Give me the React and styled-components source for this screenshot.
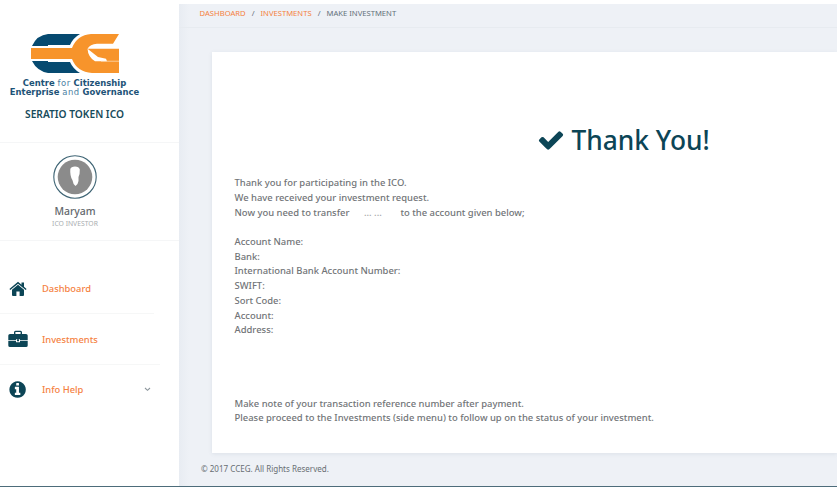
import React from 'react';
import styled, { createGlobalStyle } from 'styled-components';

const Global = createGlobalStyle`
  * { box-sizing: border-box; }
  body { margin: 0; background: #fff; overflow: hidden; font-family: "Noto Sans", "Open Sans", sans-serif; }
`;

const Page = styled.div`
  height: 487px;
  margin-bottom: 9px;
  padding-top: 4px;
  display: flex;
  border-bottom: 1px solid #4d6c7a;
`;

const Sidebar = styled.aside`
  width: 179px;
  flex: none;
  display: flex;
  flex-direction: column;
`;

const Brand = styled.div`
  height: 139px;
  padding: 30px 30px 0 0;
  display: flex;
  flex-direction: column;
  align-items: center;
  border-bottom: 1px solid #f5f6f7;
`;

const LogoText = styled.div`
  margin-top: 5px;
  text-align: center;
  white-space: nowrap;
  font: 700 8.45px/9px "DejaVu Sans", sans-serif;
  color: #1d5377;
  span { font-weight: 400; color: #4b82a3; letter-spacing: 0.5px; }
`;

const BrandTitle = styled.div`
  margin-top: 9px;
  font-size: 10.2px;
  font-weight: 600;
  line-height: 16px;
  white-space: nowrap;
  color: #174b5b;
`;

const Profile = styled.div`
  height: 98px;
  padding: 12px 29px 0 0;
  display: flex;
  flex-direction: column;
  align-items: center;
  border-bottom: 1px solid #f5f6f7;
`;

const UserName = styled.div`
  margin-top: 5px;
  font-size: 10.4px;
  font-weight: 500;
  line-height: 15px;
  color: #62686c;
`;

const Role = styled.div`
  font-size: 6.8px;
  line-height: 9px;
  color: #a9adb0;
`;

const Nav = styled.nav`
  padding-top: 23px;
  display: flex;
  flex-direction: column;
`;

const NavItem = styled.a`
  width: ${(p) => p.$width}px;
  height: ${(p) => p.$height}px;
  display: flex;
  align-items: center;
  font-size: 9.35px;
  font-weight: 500;
  color: #f5813f;
  border-bottom: 1px solid ${(p) => (p.$last ? 'transparent' : '#f6f7f7')};
`;

const NavIcon = styled.span`
  width: 36px;
  margin-right: 6px;
  display: flex;
  justify-content: center;
  color: #0c4556;
`;

const Caret = styled.svg`
  margin-left: auto;
`;

const Main = styled.main`
  flex: 1;
  min-width: 0;
  display: flex;
  flex-direction: column;
  background: linear-gradient(90deg, #e8ecf2, #eef1f6 10px);
`;

const Breadcrumbs = styled.div`
  height: 24px;
  padding: 0 0 5px 20.5px;
  display: flex;
  align-items: center;
  gap: 6px;
  font-size: 7.65px;
  white-space: nowrap;
  color: #63707a;
  border-bottom: 1px solid #e7ebf0;
`;

const Crumb = styled.a`
  color: #f5813f;
`;

const Card = styled.section`
  height: 401px;
  margin: 24px 0 0 33px;
  padding: 68px 0 0 22.5px;
  background: #fff;
  box-shadow: 0 1px 4px rgba(100, 115, 140, 0.12);
`;

const Heading = styled.h1`
  margin: 0;
  padding-left: 302px;
  height: 40px;
  display: flex;
  align-items: center;
  gap: 7px;
  font-size: 26.3px;
  font-weight: 500;
  white-space: nowrap;
  color: #0c4556;
`;

const Copy = styled.div`
  margin-top: ${(p) => p.$top}px;
  font-size: 9.44px;
  font-weight: 500;
  line-height: 14.7px;
  white-space: nowrap;
  color: #717477;
`;

const Blank = styled.span`
  display: inline-block;
  width: 51px;
  padding-right: 4px;
  text-align: center;
  color: #a0a3a6;
`;

const Footer = styled.footer`
  padding: 9px 0 0 22px;
  font-size: 8.04px;
  line-height: 14px;
  color: #686e73;
`;

const Logo = () => (
  <svg width="88" height="40" viewBox="0 0 88 40">
    <path d="M49 0H17Q6 1 1 12H17V11H39Q42 4 49 0Z" fill="#064a70" />
    <path d="M49 39H17Q6 37 1 27H17V28H39Q42 35 49 39Z" fill="#064a70" />
    <path d="M88 0L82 9.7H66Q59 10 56.5 14.7H88V39H61Q46 38 41 25H0V14H41Q46 1 60 0Z" fill="#f7942b" />
    <path d="M56.5 14.7L67 23L75 24.8L76 27.2H64Q57 23 56.5 14.7Z" fill="#fff" />
    <path d="M70 26.8H88V27.5H70Z" fill="#fde3c4" />
  </svg>
);

const Avatar = () => (
  <svg width="44" height="44" viewBox="0 0 44 44">
    <circle cx="22" cy="22" r="21.2" fill="#fff" stroke="#3e6474" strokeWidth="1.1" />
    <circle cx="22" cy="22" r="17.3" fill="#8b8b8b" />
    <path d="M17.3 14Q18 11.5 22 11.5T26.8 14.5Q27 19 25.5 22Q26 26 24.5 29L22.5 31Q20 29 19.4 25Q16.8 21 17.3 14Z" fill="#fff" />
  </svg>
);

const HomeIcon = () => (
  <svg width="18" height="16" viewBox="0 0 18 16" fill="currentColor">
    <path d="M9 3.8L15 8.8V14Q15 15 14 15H10.6V10.5H7.4V15H4Q3 15 3 14V8.8Z" />
    <path d="M9 .8L12.5 3.7V1.5H15V5.8L17.6 8L16.7 9L9 2.7L1.3 9L.4 8Z" />
  </svg>
);

const BriefcaseIcon = () => (
  <svg width="20" height="18" viewBox="0 0 20 18" fill="currentColor">
    <path d="M6 4V2.2Q6 .7 7.5 .7H12.5Q14 .7 14 2.2V4H18Q19.7 4 19.7 5.6V10.2H12V9.2H8V10.2H.3V5.6Q.3 4 2 4ZM7.4 4H12.6V2.1H7.4Z" fillRule="evenodd" />
    <path d="M.3 11H8V12.2H12V11H19.7V15.5Q19.7 17 18 17H2Q.3 17 .3 15.5Z" />
    <path d="M9 9.2H11V11.2H9Z" />
  </svg>
);

const InfoIcon = () => (
  <svg width="19.2" height="19.2" viewBox="0 0 1792 1792" fill="currentColor">
    <path d="M1152 1376v-160q0-14-9-23t-23-9h-96v-512q0-14-9-23t-23-9h-320q-14 0-23 9t-9 23v160q0 14 9 23t23 9h96v320h-96q-14 0-23 9t-9 23v160q0 14 9 23t23 9h448q14 0 23-9t9-23zm-128-896v-160q0-14-9-23t-23-9h-192q-14 0-23 9t-9 23v160q0 14 9 23t23 9h192q14 0 23-9t9-23zm640 416q0 209-103 385.5t-279.5 279.5-385.5 103-385.5-103-279.5-279.5-103-385.5 103-385.5 279.5-279.5 385.5-103 385.5 103 279.5 279.5 103 385.5z" />
  </svg>
);

const CheckIcon = () => (
  <svg width="28" height="28" viewBox="0 0 1792 1792" fill="currentColor">
    <path d="M1671 566q0 40-28 68l-724 724-136 136q-28 28-68 28t-68-28l-136-136-362-362q-28-28-28-68t28-68l136-136q28-28 68-28t68 28l294 295 656-657q28-28 68-28t68 28l136 136q28 28 28 68z" />
  </svg>
);

const fields = ['Account Name:', 'Bank:', 'International Bank Account Number:', 'SWIFT:', 'Sort Code:', 'Account:', 'Address:'];

export default function App() {
  return (
    <>
      <Global />
      <Page>
        <Sidebar>
          <Brand>
            <Logo />
            <LogoText>
              <div>Centre <span>for</span> Citizenship</div>
              <div>Enterprise <span>and</span> Governance</div>
            </LogoText>
            <BrandTitle>SERATIO TOKEN ICO</BrandTitle>
          </Brand>
          <Profile>
            <Avatar />
            <UserName>Maryam</UserName>
            <Role>ICO INVESTOR</Role>
          </Profile>
          <Nav>
            <NavItem $width={154} $height={50}>
              <NavIcon><HomeIcon /></NavIcon>Dashboard
            </NavItem>
            <NavItem $width={160} $height={51}>
              <NavIcon><BriefcaseIcon /></NavIcon>Investments
            </NavItem>
            <NavItem $width={151} $height={50} $last>
              <NavIcon><InfoIcon /></NavIcon>Info Help
              <Caret width="7" height="5" viewBox="0 0 7 5">
                <path d="M1 1L3.5 3.3L6 1" fill="none" stroke="#8d979d" strokeWidth="1.1" />
              </Caret>
            </NavItem>
          </Nav>
        </Sidebar>
        <Main>
          <Breadcrumbs>
            <Crumb>DASHBOARD</Crumb>
            <span>/</span>
            <Crumb>INVESTMENTS</Crumb>
            <span>/</span>
            <span>MAKE INVESTMENT</span>
          </Breadcrumbs>
          <Card>
            <Heading><CheckIcon />Thank You!</Heading>
            <Copy $top={16.2}>
              <div>Thank you for participating in the ICO.</div>
              <div>We have received your investment request.</div>
              <div>Now you need to transfer<Blank>... ...</Blank>to the account given below;</div>
            </Copy>
            <Copy $top={14.7}>
              {fields.map((field) => <div key={field}>{field}</div>)}
            </Copy>
            <Copy $top={58.8}>
              <div>Make note of your transaction reference number after payment.</div>
              <div>Please proceed to the Investments (side menu) to follow up on the status of your investment.</div>
            </Copy>
          </Card>
          <Footer>© 2017 CCEG. All Rights Reserved.</Footer>
        </Main>
      </Page>
    </>
  );
}
